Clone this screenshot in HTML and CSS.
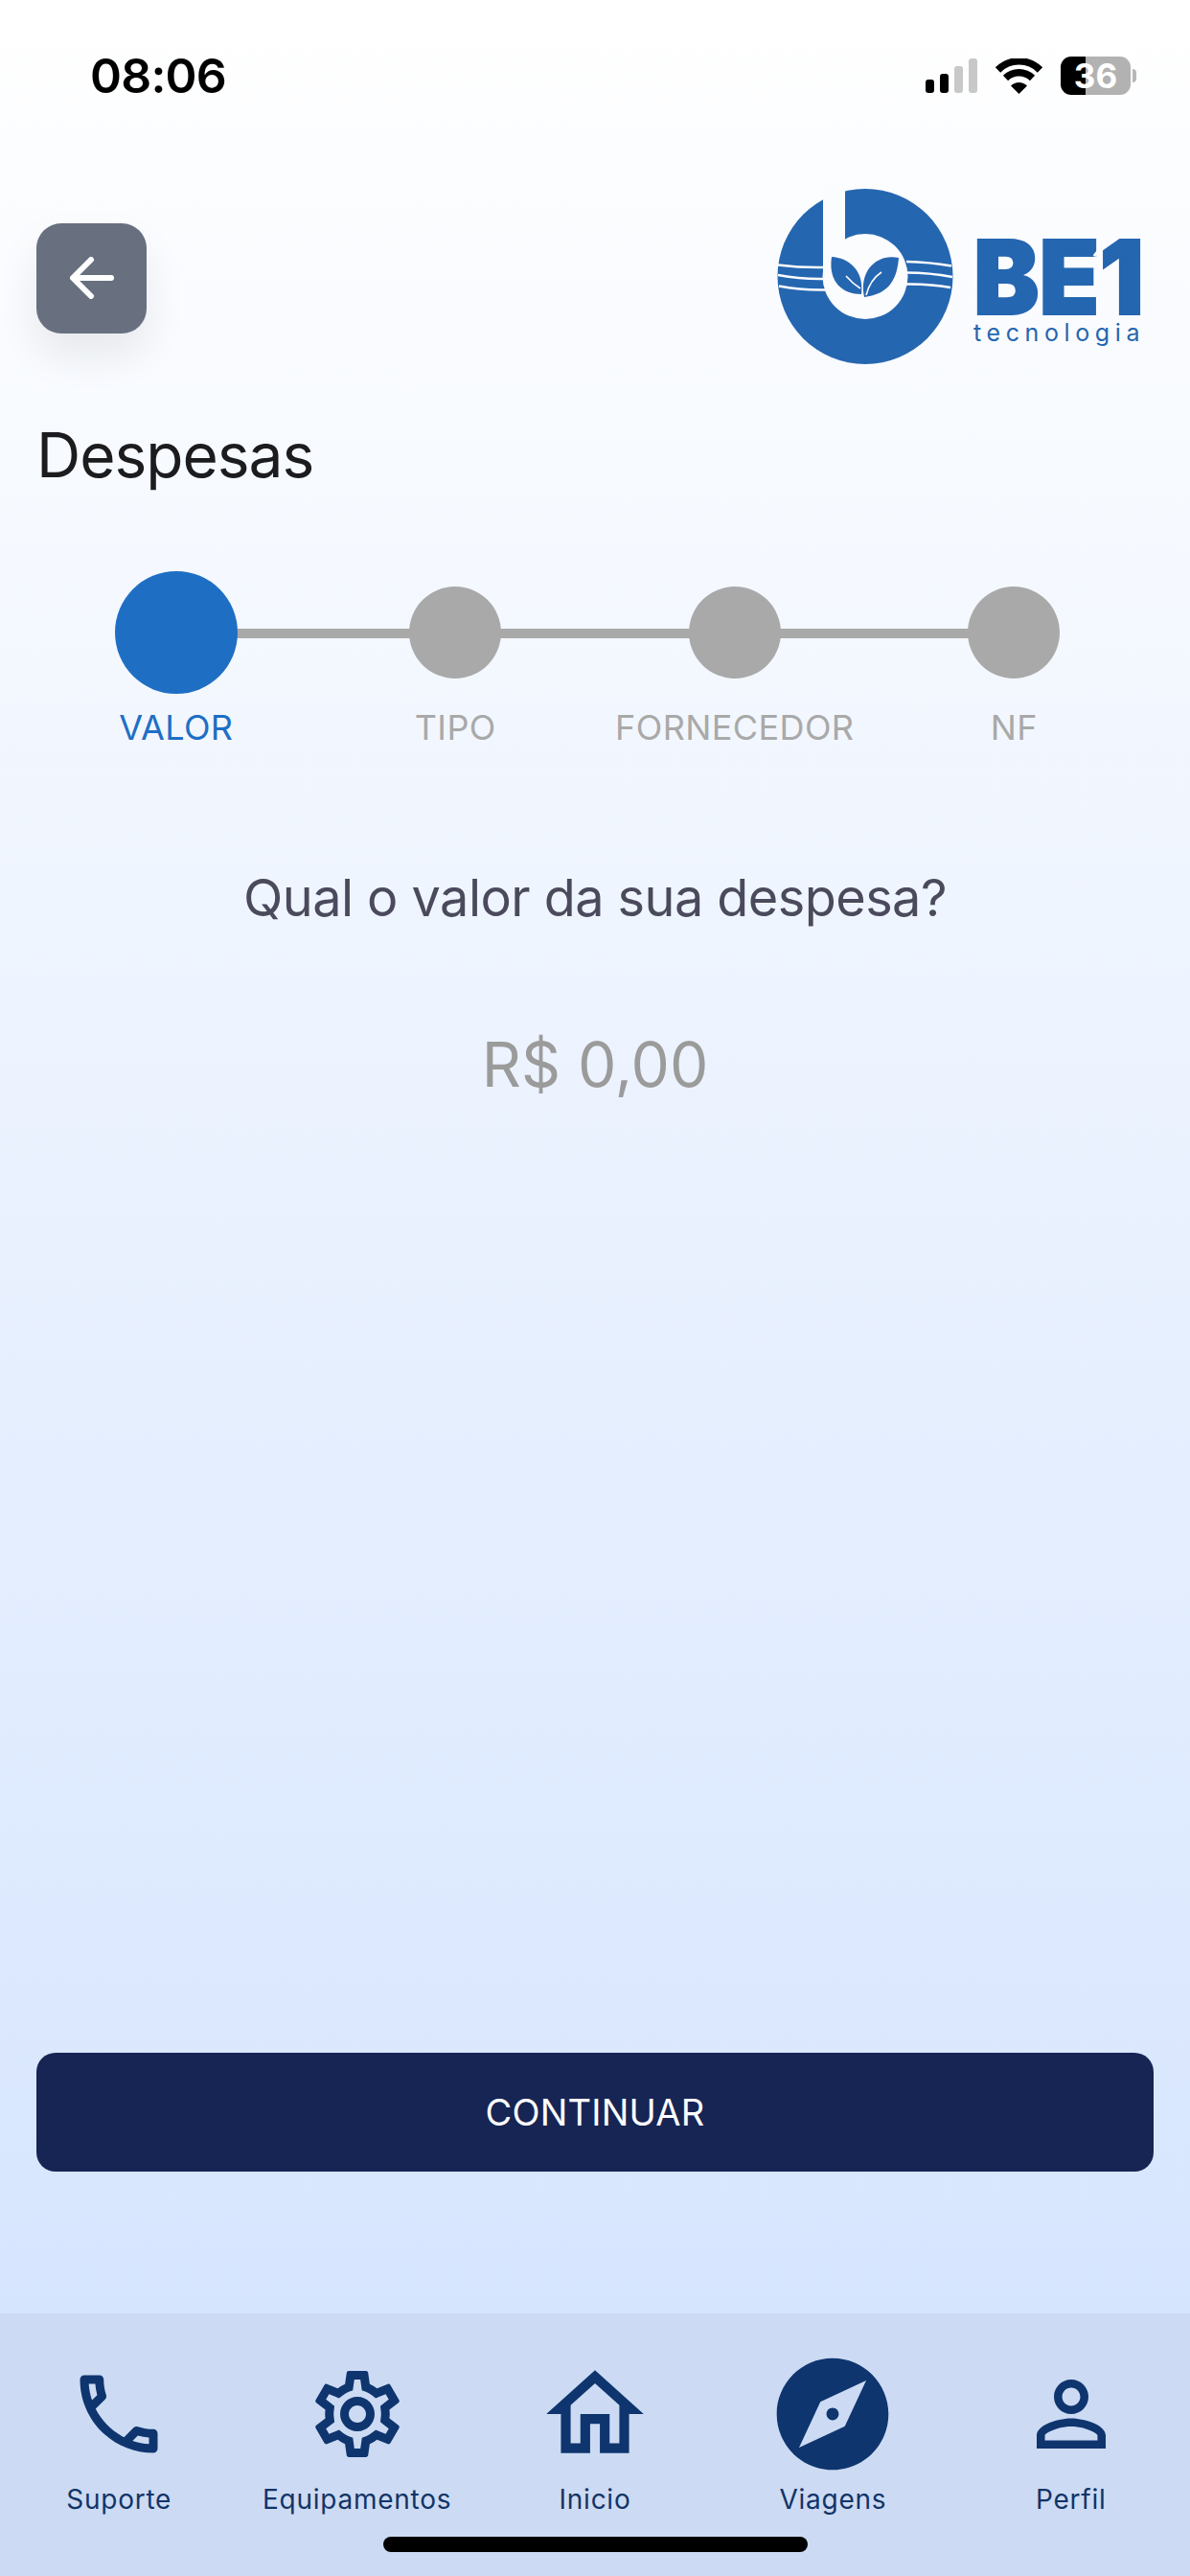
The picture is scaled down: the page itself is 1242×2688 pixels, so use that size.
FILE: index.html
```html
<!DOCTYPE html>
<html lang="pt-BR">
<head>
    <meta charset="UTF-8">
    <meta name="viewport" content="width=device-width, initial-scale=1.0">
    <title>Despesas</title>
    <link rel="stylesheet" href="styles.css">
</head>
<body>
    <div class="screen">
        <div class="status">
            <span class="time">08:06</span>
            <div class="status-icons">
                <div class="signal">
                    <i class="bar-1"></i>
                    <i class="bar-2"></i>
                    <i class="bar-3"></i>
                    <i class="bar-4"></i>
                </div>
                <svg class="wifi" viewBox="0 0 51 37">
                    <path class="wifi-arc" d="M3.5 12A31 31 0 0 1 47.5 12"/>
                    <path class="wifi-arc" d="M11.5 20.5A20 20 0 0 1 39.5 20.5"/>
                    <path class="wifi-dot" d="M25.5 37L17 28.5A12 12 0 0 1 34 28.5Z"/>
                </svg>
                <div class="battery">36</div>
            </div>
        </div>

        <header class="top">
            <button class="back" type="button">
                <svg viewBox="0 0 46 44"><path d="M43 22H4M22 3L3 22l19 19"/></svg>
            </button>
            <div class="logo">
                <svg class="logo-mark" viewBox="810 196 186 190">
                    <circle class="logo-blue" cx="903" cy="289.5" r="91.5"/>
                    <circle class="logo-cut" cx="903" cy="289.5" r="44.5"/>
                    <rect class="logo-cut" x="859" y="190" width="23" height="100"/>
                    <path class="logo-line" d="M812 277.5Q836 280.5 860 280M812 288Q836 292.5 860 292M813 299.5Q836 304 862 303.5"/>
                    <path class="logo-line" d="M946 274Q970 274.5 993 278.5M946 285.5Q970 285.5 994 290M946 297.5Q970 297 992 301"/>
                    <path class="logo-blue" d="M868 269C885 270 902 282 899 308C880 308 864 296 868 269Z"/>
                    <path class="logo-blue" d="M938 270C915 265 896 284 902 311C925 308 936 296 938 270Z"/>
                    <path class="logo-vein" d="M883 289Q890 297 898 302M904 309Q908 293 920 285"/>
                </svg>
                <div class="logo-text">
                    <span class="logo-name">BE1</span>
                    <span class="logo-sub">tecnologia</span>
                </div>
            </div>
        </header>

        <main class="content">
            <h1 class="title">Despesas</h1>

            <div class="stepper">
                <div class="step active">
                    <div class="dot-cell"><span class="dot"></span></div>
                    <span class="step-label">VALOR</span>
                </div>
                <div class="step">
                    <div class="dot-cell"><span class="dot"></span></div>
                    <span class="step-label">TIPO</span>
                </div>
                <div class="step">
                    <div class="dot-cell"><span class="dot"></span></div>
                    <span class="step-label">FORNECEDOR</span>
                </div>
                <div class="step">
                    <div class="dot-cell"><span class="dot"></span></div>
                    <span class="step-label">NF</span>
                </div>
            </div>

            <p class="question">Qual o valor da sua despesa?</p>
            <p class="amount">R$ 0,00</p>

            <button class="continue" type="button">CONTINUAR</button>
        </main>

        <nav class="tabs">
            <a class="tab">
                <span class="tab-icon"><svg class="icon-md" viewBox="0 0 24 24"><path d="M6.54 5c.06.89.21 1.76.45 2.59l-1.2 1.2c-.41-1.2-.67-2.47-.76-3.79h1.51m9.86 12.02c.85.24 1.72.39 2.6.45v1.49c-1.32-.09-2.59-.35-3.8-.75l1.2-1.19M7.5 3H4c-.55 0-1 .45-1 1 0 9.39 7.61 17 17 17 .55 0 1-.45 1-1v-3.49c0-.55-.45-1-1-1-1.24 0-2.45-.2-3.57-.57-.1-.04-.21-.05-.31-.05-.26 0-.51.1-.71.29l-2.2 2.2c-2.83-1.45-5.15-3.76-6.59-6.59l2.2-2.2c.28-.28.36-.67.25-1.02C8.7 6.45 8.5 5.25 8.5 4c0-.55-.45-1-1-1z"/></svg></span>
                <span class="tab-label">Suporte</span>
            </a>
            <a class="tab">
                <span class="tab-icon"><svg class="icon-md" viewBox="0 0 24 24"><path d="M19.43 12.98c.04-.32.07-.64.07-.98 0-.34-.03-.66-.07-.98l2.11-1.65c.19-.15.24-.42.12-.64l-2-3.46c-.09-.16-.26-.25-.44-.25-.06 0-.12.01-.17.03l-2.49 1c-.52-.4-1.08-.73-1.69-.98l-.38-2.65C14.46 2.18 14.25 2 14 2h-4c-.25 0-.46.18-.49.42l-.38 2.65c-.61.25-1.17.59-1.69.98l-2.49-1c-.06-.02-.12-.03-.18-.03-.17 0-.34.09-.43.25l-2 3.46c-.13.22-.07.49.12.64l2.11 1.65c-.04.32-.07.65-.07.98 0 .33.03.66.07.98l-2.11 1.65c-.19.15-.24.42-.12.64l2 3.46c.09.16.26.25.44.25.06 0 .12-.01.17-.03l2.49-1c.52.4 1.08.73 1.69.98l.38 2.65c.03.24.24.42.49.42h4c.25 0 .46-.18.49-.42l.38-2.65c.61-.25 1.17-.59 1.69-.98l2.49 1c.06.02.12.03.18.03.17 0 .34-.09.43-.25l2-3.46c.12-.22.07-.49-.12-.64l-2.11-1.65zm-1.98-1.71c.04.31.05.52.05.73 0 .21-.02.43-.05.73l-.14 1.13.89.7 1.08.84-.7 1.21-1.27-.51-1.04-.42-.9.68c-.43.32-.84.56-1.25.73l-1.06.43-.16 1.13-.2 1.35h-1.4l-.19-1.35-.16-1.13-1.06-.43c-.43-.18-.83-.41-1.23-.71l-.91-.7-1.06.43-1.27.51-.7-1.21 1.08-.84.89-.7-.14-1.13c-.03-.31-.05-.54-.05-.74s.02-.43.05-.73l.14-1.13-.89-.7-1.08-.84.7-1.21 1.27.51 1.04.42.9-.68c.43-.32.84-.56 1.25-.73l1.06-.43.16-1.13.2-1.35h1.39l.19 1.35.16 1.13 1.06.43c.43.18.83.41 1.23.71l.91.7 1.06-.43 1.27-.51.7 1.21-1.07.85-.89.7.14 1.13zM12 8c-2.21 0-4 1.79-4 4s1.79 4 4 4 4-1.79 4-4-1.79-4-4-4zm0 6c-1.1 0-2-.9-2-2s.9-2 2-2 2 .9 2 2-.9 2-2 2z"/></svg></span>
                <span class="tab-label">Equipamentos</span>
            </a>
            <a class="tab">
                <span class="tab-icon"><svg class="icon-home" viewBox="0 0 24 24"><path d="M12 5.69l5 4.5V18h-2v-6H9v6H7v-7.81l5-4.5M12 3L2 12h3v8h6v-6h2v6h6v-8h3L12 3z"/></svg></span>
                <span class="tab-label">Inicio</span>
            </a>
            <a class="tab">
                <span class="tab-icon"><svg class="icon-lg" viewBox="0 0 24 24"><path fill-rule="evenodd" d="M12 10.9c-.61 0-1.1.49-1.1 1.1s.49 1.1 1.1 1.1c.61 0 1.1-.49 1.1-1.1s-.49-1.1-1.1-1.1zM12 2C6.48 2 2 6.48 2 12s4.48 10 10 10 10-4.48 10-10S17.52 2 12 2zm2.19 12.19L6 18l3.81-8.19L18 6l-3.81 8.19z"/></svg></span>
                <span class="tab-label">Viagens</span>
            </a>
            <a class="tab">
                <span class="tab-icon"><svg class="icon-md" viewBox="0 0 24 24"><path d="M12 5.9c1.16 0 2.1.94 2.1 2.1s-.94 2.1-2.1 2.1S9.9 9.16 9.9 8s.94-2.1 2.1-2.1m0 9c2.97 0 6.1 1.46 6.1 2.1v1.1H5.9V17c0-.64 3.13-2.1 6.1-2.1M12 4C9.79 4 8 5.79 8 8s1.79 4 4 4 4-1.79 4-4-1.79-4-4-4zm0 9c-2.67 0-8 1.34-8 4v3h16v-3c0-2.66-5.33-4-8-4z"/></svg></span>
                <span class="tab-label">Perfil</span>
            </a>
            <span class="home-bar"></span>
        </nav>
    </div>
</body>
</html>
```

FILE: styles.css
```css
body {
    margin: 0;
    font-family: Inter, "Liberation Sans", sans-serif;
    color: #1c1c1e;
}
.screen {
    width: 1242px;
    height: 2688px;
    display: flex;
    flex-direction: column;
    overflow: hidden;
    background: linear-gradient(180deg, #ffffff 0, #d6e5fe 2414px);
}

/* status bar */
.status {
    height: 156px;
    flex-shrink: 0;
    display: flex;
    align-items: center;
    justify-content: space-between;
    padding: 2px 62px 0 94px;
    box-sizing: border-box;
}
.time {
    font-size: 50px;
    font-weight: 600;
    line-height: 60px;
    letter-spacing: -0.8px;
    color: #000;
}
.status-icons {
    display: flex;
    align-items: center;
    gap: 18px;
}
.signal {
    display: flex;
    align-items: flex-end;
    gap: 6px;
    height: 36px;
}
.signal i {
    width: 9px;
    border-radius: 3px;
    background-color: #000;
}
.signal .bar-1 { height: 14px; }
.signal .bar-2 { height: 20px; }
.signal .bar-3 { height: 28px; background-color: #c8c8c8; }
.signal .bar-4 { height: 36px; background-color: #c8c8c8; }
.wifi {
    width: 51px;
    height: 37px;
}
.wifi-arc {
    fill: none;
    stroke: #000;
    stroke-width: 7.5;
}
.wifi-dot {
    fill: #000;
}
.battery {
    position: relative;
    width: 73px;
    height: 40px;
    border-radius: 11px;
    background: linear-gradient(90deg, #000 0, #000 26px, #b2b2b2 26px);
    color: #fff;
    font-size: 35px;
    font-weight: 700;
    line-height: 40px;
    text-align: center;
}
.battery::after {
    content: "";
    position: absolute;
    left: 75px;
    top: 13px;
    width: 4px;
    height: 14px;
    border-radius: 0 7px 7px 0;
    background-color: #b8b8b8;
}

/* header */
.top {
    height: 268px;
    flex-shrink: 0;
    display: flex;
    align-items: center;
    justify-content: space-between;
    padding: 0 52px 0 38px;
    box-sizing: border-box;
}
.back {
    width: 115px;
    height: 115px;
    padding: 0;
    border: none;
    border-radius: 26px;
    background-color: #687080;
    box-shadow: 0 22px 44px rgba(0, 0, 0, 0.08);
    display: flex;
    align-items: center;
    justify-content: center;
}
.back svg {
    width: 46px;
    height: 44px;
    fill: none;
    stroke: #fff;
    stroke-width: 6;
    stroke-linecap: round;
    stroke-linejoin: round;
}
.logo {
    width: 380px;
    height: 190px;
    display: flex;
    gap: 20px;
}
.logo-mark {
    width: 186px;
    height: 190px;
    flex-shrink: 0;
}
.logo-blue {
    fill: #2566b0;
}
.logo-cut {
    fill: #fbfcfe;
}
.logo-line {
    fill: none;
    stroke: #fbfcfe;
    stroke-width: 2.6;
}
.logo-vein {
    fill: none;
    stroke: #fbfcfe;
    stroke-width: 1.6;
}
.logo-text {
    display: flex;
    flex-direction: column;
    margin-top: 55px;
    color: #2566b0;
}
.logo-name {
    position: relative;
    font-size: 107px;
    font-weight: 900;
    line-height: 78px;
    -webkit-text-stroke: 2px #2566b0;
    transform: scaleX(0.96);
    transform-origin: left center;
}
.logo-name::after {
    content: "";
    position: absolute;
    left: 137px;
    top: -3px;
    width: 3px;
    height: 23px;
    background-color: #fbfcfe;
    transform: rotate(40deg);
}
.logo-sub {
    margin-top: 4px;
    font-size: 25px;
    line-height: 30px;
    letter-spacing: 5.6px;
}

/* content */
.content {
    flex: 1;
    display: flex;
    flex-direction: column;
    padding: 0 38px;
    min-height: 0;
}
.title {
    margin: 13px 0 0;
    font-size: 64px;
    font-weight: 400;
    line-height: 76px;
    letter-spacing: -1px;
}
.stepper {
    position: relative;
    display: grid;
    grid-template-columns: repeat(4, 1fr);
    margin-top: 83px;
}
.stepper::before {
    content: "";
    position: absolute;
    left: 146px;
    right: 146px;
    top: 60px;
    height: 10px;
    background-color: #a9a9a9;
}
.step {
    position: relative;
    display: flex;
    flex-direction: column;
    align-items: center;
}
.dot-cell {
    height: 128px;
    display: flex;
    align-items: center;
}
.dot {
    display: block;
    width: 96px;
    height: 96px;
    border-radius: 50%;
    background-color: #a9a9a9;
}
.step.active .dot {
    width: 128px;
    height: 128px;
    background-color: #1e6fc4;
}
.step-label {
    margin-top: 13px;
    font-size: 36px;
    line-height: 44px;
    letter-spacing: 0.4px;
    color: #a9a9a9;
}
.step.active .step-label {
    color: #1e6fc4;
}
.question {
    margin: 123px 0 0;
    font-size: 54px;
    line-height: 66px;
    letter-spacing: -0.55px;
    text-align: center;
    color: #4a4a5c;
}
.amount {
    margin: 103px 0 0;
    font-size: 64px;
    line-height: 76px;
    text-align: center;
    color: #9b9b9b;
}
.continue {
    height: 124px;
    margin-top: auto;
    margin-bottom: 148px;
    flex-shrink: 0;
    border: none;
    border-radius: 20px;
    background-color: #162554;
    color: #fff;
    font-family: inherit;
    font-size: 38px;
    letter-spacing: 0.2px;
}

/* bottom tabs */
.tabs {
    position: relative;
    height: 274px;
    flex-shrink: 0;
    display: grid;
    grid-template-columns: repeat(5, 1fr);
    padding-top: 46px;
    box-sizing: border-box;
    background-color: #ccdbf3;
}
.tab {
    display: flex;
    flex-direction: column;
    align-items: center;
}
.tab-icon {
    height: 117px;
    display: flex;
    align-items: center;
    justify-content: center;
}
.tab-icon svg {
    flex-shrink: 0;
    fill: #0f356f;
}
.icon-md {
    width: 108px;
    height: 108px;
}
.icon-home {
    width: 122px;
    height: 122px;
}
.icon-lg {
    width: 140px;
    height: 140px;
}
.tab-label {
    margin-top: 15px;
    font-size: 28px;
    line-height: 32px;
    letter-spacing: 0.75px;
    color: #123468;
}
.home-bar {
    position: absolute;
    left: 400px;
    bottom: 25px;
    width: 443px;
    height: 16px;
    border-radius: 8px;
    background-color: #000;
}
```
